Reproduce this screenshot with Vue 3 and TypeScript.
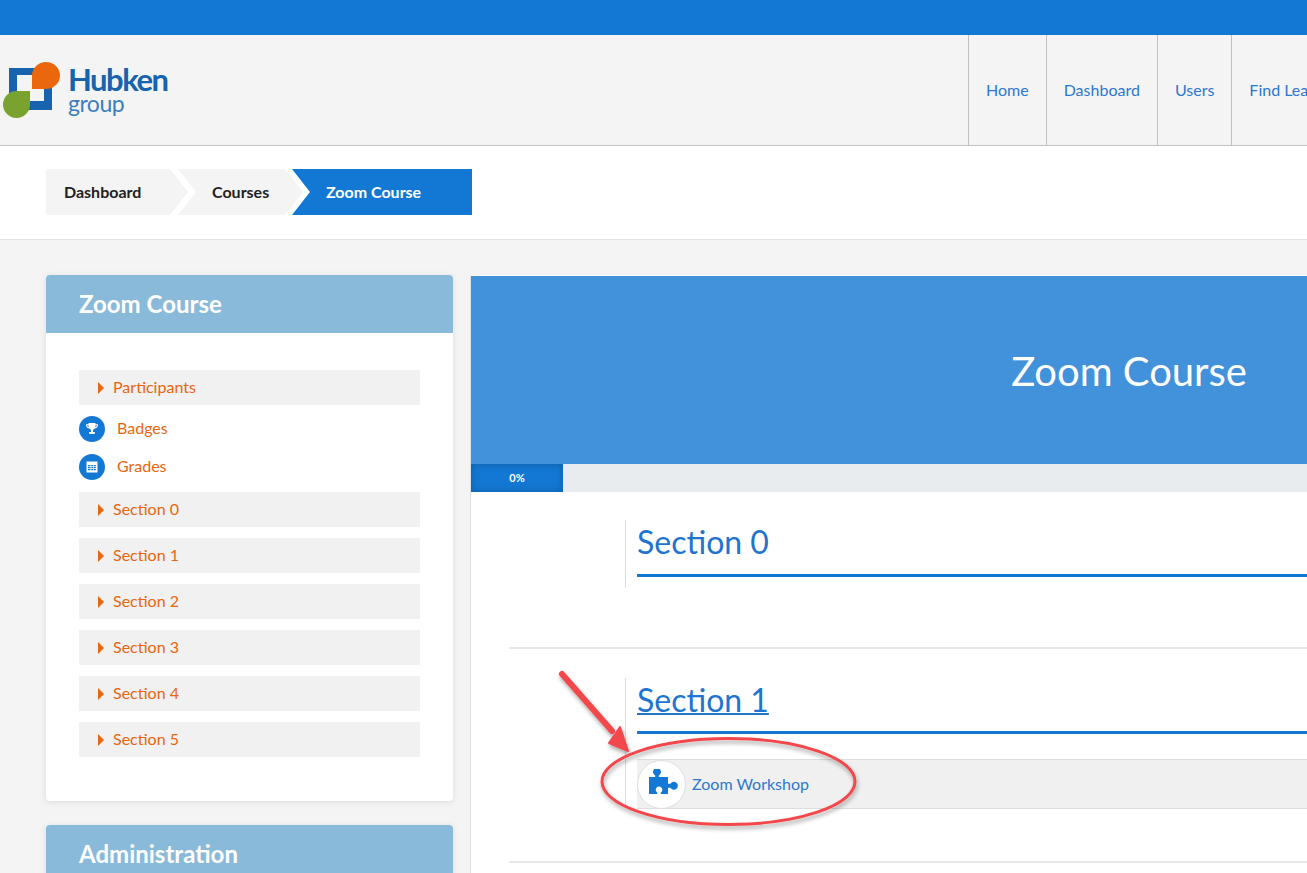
<script setup lang="ts">
const navItems: string[] = ['Home', 'Dashboard', 'Users', 'Find Learning'];
const sections: string[] = ['Section 0', 'Section 1', 'Section 2', 'Section 3', 'Section 4', 'Section 5'];
</script>

<template>
  <div class="page">
    <div class="topbar"></div>
    <header class="header">
      <div class="logo">
        <svg class="logo-mark" width="62" height="60" viewBox="0 0 62 60">
          <path d="M9 8H52V50H9Z M17 15V41H44V15Z" fill="#1763ad" fill-rule="evenodd" />
          <path d="M32 29V15.500A14 13.500 0 1 1 46 29Z" fill="#ea670c" />
          <path d="M30 31V44.500A13.500 13.500 0 1 1 16.500 31Z" fill="#7aa22f" />
        </svg>
        <div class="logo-text">
          <span class="logo-name">Hubken</span>
          <span class="logo-sub">group</span>
        </div>
      </div>
      <nav class="nav">
        <a v-for="item in navItems" :key="item" class="nav-item">{{ item }}</a>
      </nav>
    </header>

    <div class="crumbs">
      <div class="crumb crumb-first">Dashboard</div>
      <div class="crumb crumb-mid">Courses</div>
      <div class="crumb crumb-active">Zoom Course</div>
    </div>

    <main class="main">
      <aside class="sidebar">
        <section class="block">
          <h2 class="block-title">Zoom Course</h2>
          <div class="block-body">
            <div class="tree-row"><span class="caret"></span><span class="tree-label">Participants</span></div>
            <div class="icon-row icon-row-first">
              <span class="round-icon">
                <svg width="14" height="14" viewBox="0 0 14 14">
                  <path d="M3.500 1h7v1.200h2.500c0 2.500-1 4-3.200 4.300-.5.700-1.100 1.100-1.800 1.300v2.200h1.800V12H4.200v-2h1.800V7.800c-.7-.2-1.300-.6-1.800-1.300C2 6.200 1 4.700 1 2.200h2.500Zm-1.300 2.200c.1 1 .5 1.700 1.400 2.100-.1-.7-.1-1.400-.1-2.100Zm9.600 0h-1.300c0 .7 0 1.400-.1 2.100.9-.4 1.300-1.100 1.400-2.100Z" fill="#fff" />
                </svg>
              </span>
              <span class="icon-label">Badges</span>
            </div>
            <div class="icon-row">
              <span class="round-icon">
                <svg width="14" height="14" viewBox="0 0 14 14">
                  <path d="M1.500 1.500h11v11h-11Z" fill="#fff" />
                  <path d="M3 5h2.500v1.200H3Zm3.300 0h1.800v1.200H6.300Zm2.500 0h2v1.200h-2ZM3 7h2.500v1.200H3Zm3.300 0h1.800v1.200H6.300Zm2.500 0h2v1.200h-2ZM3 9h2.500v1.200H3Zm3.300 0h1.800v1.200H6.300Zm2.500 0h2v1.200h-2Z" fill="#1378d3" />
                </svg>
              </span>
              <span class="icon-label">Grades</span>
            </div>
            <div v-for="s in sections" :key="s" class="tree-row tree-section"><span class="caret"></span><span class="tree-label">{{ s }}</span></div>
          </div>
        </section>
        <section class="block">
          <h2 class="block-title">Administration</h2>
        </section>
      </aside>

      <div class="content">
        <div class="hero"><h1 class="hero-title">Zoom Course</h1></div>
        <div class="progress"><div class="progress-bar">0%</div></div>
        <div class="course">
          <div class="section section-zero">
            <div class="section-inner">
              <h3 class="section-title">Section 0</h3>
            </div>
          </div>
          <div class="section section-one">
            <div class="section-inner">
              <h3 class="section-title"><a class="section-link">Section 1</a></h3>
              <div class="activity">
                <span class="activity-icon">
                  <svg width="32" height="30" viewBox="1 0 32 30">
                    <path d="M4 8H10.200V6.600A4 4 0 1 1 13.800 6.600V8H23V14.800H25.400A4 4 0 1 1 25.400 18.800H23V25H15.800V23.600A3.300 3.300 0 1 0 12.200 23.600V25H4Z" fill="#1378d3" />
                  </svg>
                </span>
                <span class="activity-name">Zoom Workshop</span>
              </div>
            </div>
          </div>
        </div>
      </div>
    </main>

    <svg class="annotation" width="1307" height="873" viewBox="0 0 1307 873">
      <defs>
        <filter id="annotation-shadow" x="-10%" y="-10%" width="120%" height="130%">
          <feDropShadow dx="1" dy="3" stdDeviation="2" flood-color="#000" flood-opacity="0.35" />
        </filter>
      </defs>
      <g filter="url(#annotation-shadow)">
        <ellipse cx="728.500" cy="781.500" rx="126.500" ry="43" fill="none" stroke="#f2474c" stroke-width="3" />
        <path d="M562 674 L612 731" stroke="#f2474c" stroke-width="6" stroke-linecap="round" fill="none" />
        <path d="M628 751 L609 743 L620 727 Z" fill="#f2474c" stroke="#f2474c" stroke-width="2" stroke-linejoin="round" />
      </g>
    </svg>
  </div>
</template>

<style>
html, body { margin: 0; overflow: hidden; }
</style>

<style scoped>
.page {
  position: relative;
  width: 1307px;
  height: 873px;
  overflow: hidden;
  background: #fff;
  font-family: Lato, "Open Sans", sans-serif;
}
.topbar { height: 35px; background: #1378d3; }
.header {
  height: 111px;
  box-sizing: border-box;
  background: #f4f4f4;
  border-bottom: 1px solid #c4c4c4;
  display: flex;
  justify-content: space-between;
  overflow: hidden;
}
.logo { display: flex; align-items: flex-start; padding: 25px 0 0 0; }
.logo-mark { display: block; flex: none; }
.logo-text { display: flex; flex-direction: column; margin-left: 6px; margin-top: 5px; color: #1763ad; }
.logo-name { font-size: 31px; font-weight: 700; line-height: 28px; letter-spacing: -1.500px; }
.logo-sub { font-size: 23px; line-height: 20px; color: #3b7fc0; font-weight: 400; letter-spacing: -0.500px; }
.nav { display: flex; flex: none; width: 339px; overflow: hidden; }
.nav-item {
  flex: none;
  height: 110px;
  line-height: 110px;
  padding: 0 17px;
  border-left: 1px solid #c0c0c0;
  color: #2b78d0;
  font-size: 16px;
  white-space: nowrap;
}
.crumbs {
  height: 94px;
  box-sizing: border-box;
  border-bottom: 1px solid #e3e3e3;
  display: flex;
  align-items: flex-start;
  padding: 23px 0 0 46px;
  font-size: 16px;
  font-weight: 700;
}
.crumb { height: 46px; line-height: 46px; color: #222; background: #f4f4f4; box-sizing: border-box; }
.crumb-first {
  width: 142px;
  padding-left: 18px;
  clip-path: polygon(0 0, 124px 0, 100% 50%, 124px 100%, 0 100%);
}
.crumb-mid {
  width: 125px;
  margin-left: -10px;
  padding-left: 34px;
  clip-path: polygon(0 0, 107px 0, 100% 50%, 107px 100%, 0 100%, 18px 50%);
}
.crumb-active {
  width: 180px;
  margin-left: -11px;
  padding-left: 34px;
  background: #1378d3;
  color: #fff;
  clip-path: polygon(0 0, 100% 0, 100% 100%, 0 100%, 18px 50%);
}
.main {
  background: #f4f4f4;
  display: flex;
  align-items: flex-start;
  padding: 35px 0 0 46px;
  height: 633px;
  box-sizing: border-box;
}
.sidebar { width: 407px; flex: none; display: flex; flex-direction: column; gap: 24px; }
.block {
  background: #fff;
  border-radius: 4px;
  box-shadow: 0 1px 6px rgba(0, 0, 0, 0.1);
  overflow: hidden;
}
.block-title {
  margin: 0;
  height: 58px;
  line-height: 58px;
  padding-left: 33px;
  background: #8abada;
  color: #fff;
  font-size: 24px;
  font-weight: 700;
}
.block-body { padding: 37px 33px 44px; }
.tree-row {
  height: 35px;
  background: #f1f1f1;
  color: #e8660f;
  font-size: 16px;
  display: flex;
  align-items: center;
  padding-left: 19px;
}
.tree-label { padding-bottom: 2px; }
.tree-section { margin-top: 11px; }
.icon-row + .tree-section { margin-top: 12px; }
.caret {
  width: 0;
  height: 0;
  margin-right: 9px;
  border-left: 6px solid #e8660f;
  border-top: 6px solid transparent;
  border-bottom: 6px solid transparent;
}
.icon-row {
  display: flex;
  align-items: center;
  gap: 12px;
  height: 26px;
  margin-top: 12px;
  color: #e8660f;
  font-size: 16px;
}
.icon-row-first { margin-top: 11px; }
.icon-label { padding-bottom: 4px; }
.round-icon {
  width: 26px;
  height: 26px;
  border-radius: 50%;
  background: #1378d3;
  display: flex;
  align-items: center;
  justify-content: center;
  flex: none;
}
.content {
  flex: none;
  width: 837px;
  margin-left: 17px;
  height: 640px;
  background: #fff;
  border-left: 1px solid #e0e0e0;
  box-sizing: border-box;
}
.hero {
  height: 188px;
  background: #4291db;
  display: flex;
  align-items: center;
  justify-content: flex-end;
  padding: 2px 60px 0 0;
  margin-top: 1px;
  box-sizing: border-box;
}
.hero-title { margin: 0; color: #fff; font-size: 40px; font-weight: 400; white-space: nowrap; }
.progress { height: 28px; background: #e9ecef; }
.progress-bar {
  width: 92px;
  height: 28px;
  line-height: 28px;
  background: #1378d3;
  box-shadow: inset 0 0 8px rgba(0, 0, 0, 0.22);
  color: #fff;
  font-size: 11px;
  font-weight: 700;
  text-align: center;
}
.course { padding: 28px 0 0 38px; }
.section { border-bottom: 2px solid #e8e8e8; }
.section-zero { height: 129px; box-sizing: border-box; }
.section-one { height: 214px; box-sizing: border-box; padding-top: 29px; }
.section-inner { border-left: 1px solid #dcdcdc; margin-left: 116px; padding-left: 11px; }
.section-zero .section-inner { height: 68px; }
.section-one .section-inner { height: 128px; }
.section-title {
  margin: 0;
  height: 54px;
  line-height: 43px;
  color: #1f74cf;
  font-size: 32px;
  font-weight: 400;
  border-bottom: 3px solid #1378d3;
}
.section-one .section-title { height: 53px; }
.section-link { text-decoration: underline; text-decoration-thickness: 2px; }
.activity {
  margin-top: 25px;
  height: 50px;
  box-sizing: border-box;
  background: #f0f0f0;
  border-top: 1px solid #dedede;
  border-bottom: 1px solid #dedede;
  display: flex;
  align-items: center;
  color: #2b78d0;
  font-size: 16px;
}
.activity-name { padding-bottom: 2px; }
.activity-icon {
  width: 49px;
  height: 49px;
  box-sizing: border-box;
  border: 1px solid #dedede;
  border-radius: 50%;
  background: #fff;
  display: flex;
  align-items: center;
  justify-content: center;
  margin-right: 6px;
  flex: none;
}
.annotation { position: absolute; left: 0; top: 0; pointer-events: none; }
</style>
